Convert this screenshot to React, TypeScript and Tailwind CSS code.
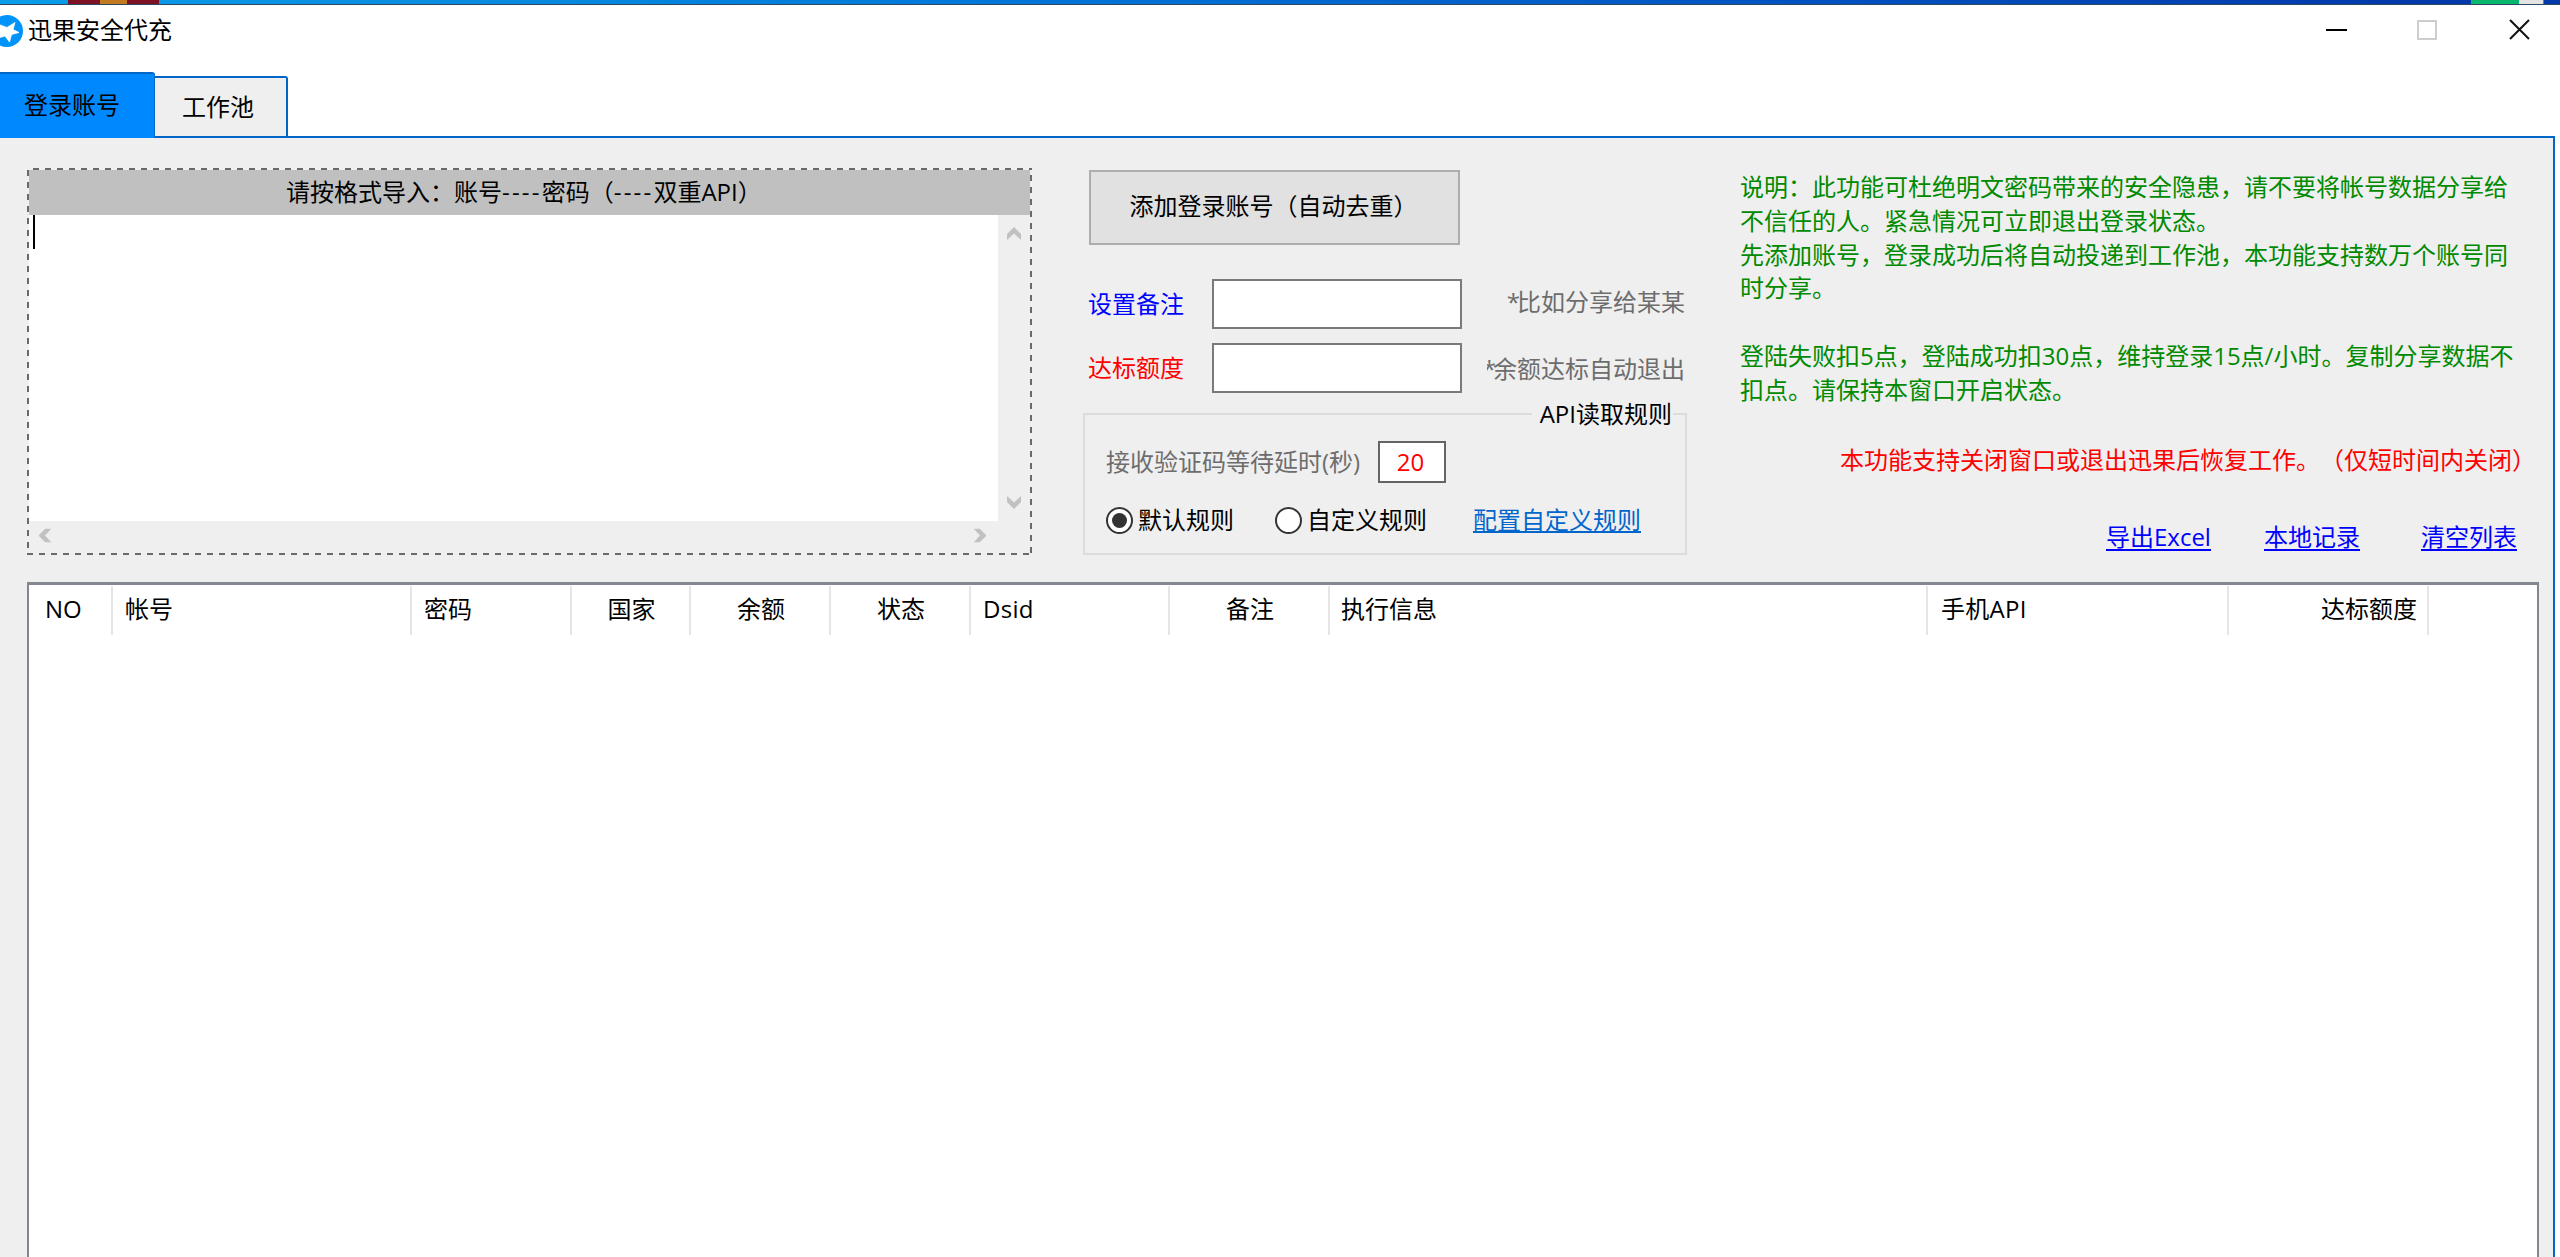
import React from "react";

// Columns of the account list, widths include the 2px divider on the right
const columns = [
  { title: "NO", className: "w-[84px] pl-[16px]" },
  { title: "帐号", className: "w-[299px] pl-[12px]" },
  { title: "密码", className: "w-[160px] pl-[12px]" },
  { title: "国家", className: "w-[119px] justify-center pl-[2px]" },
  { title: "余额", className: "w-[140px] justify-center pl-[2px]" },
  { title: "状态", className: "w-[140px] justify-center pl-[2px]" },
  { title: "Dsid", className: "w-[199px] pl-[12px] tracking-[0.3px]" },
  { title: "备注", className: "w-[160px] justify-center pl-[2px]" },
  { title: "执行信息", className: "w-[598px] pl-[11px]" },
  { title: "手机API", className: "w-[301px] pl-[13px] tracking-[0.3px]" },
  { title: "达标额度", className: "w-[200px] justify-end pr-[10px]" },
];

const notes = [
  "说明：此功能可杜绝明文密码带来的安全隐患，请不要将帐号数据分享给",
  "不信任的人。紧急情况可立即退出登录状态。",
  "先添加账号，登录成功后将自动投递到工作池，本功能支持数万个账号同",
  "时分享。",
  "",
  "登陆失败扣5点，登陆成功扣30点，维持登录15点/小时。复制分享数据不",
  "扣点。请保持本窗口开启状态。",
];

function Logo() {
  return (
    <svg className="-ml-[9px] h-[32px] w-[32px] shrink-0" viewBox="0 0 32 32">
      <circle cx="16" cy="16" r="16" fill="#0094fb" />
      <path
        d="M4 8 L16 12.5 L24 7.5 L22 14.5 L28 17.5 L20.5 19.5 L18.5 27 L14 21 L4 24 L9 16 Z"
        fill="#fff"
        stroke="#fff"
        strokeWidth="0.8"
        strokeLinejoin="round"
      />
    </svg>
  );
}

function Arrow({ className }: { className: string }) {
  return (
    <svg className={className} width="14" height="13" viewBox="0 0 14 13">
      <path d="M7 0 L14 7 V13 L7 6.5 L0 13 V7 Z" fill="#c1c1c1" />
    </svg>
  );
}

function Dashes() {
  return <span className="tracking-[2.2px]">----</span>;
}

function TitleBar() {
  return (
    <div className="flex h-[67px] items-start bg-white">
      <div className="flex h-[51px] flex-1 items-center">
        <Logo />
        <span className="ml-[5px] pb-px">迅果安全代充</span>
      </div>
      <div className="flex h-[49px] items-center pr-[30px]">
        <div className="h-[2px] w-[21px] bg-black" />
        <div className="ml-[70px] h-[20px] w-[20px] border-2 border-[#cdcdcd]" />
        <svg className="-mt-px ml-[72px]" width="21" height="21" viewBox="0 0 21 21">
          <path d="M1 1 L20 20 M20 1 L1 20" stroke="#111" strokeWidth="2" />
        </svg>
      </div>
    </div>
  );
}

function Tabs() {
  return (
    <div className="flex h-[64px] items-end">
      <div className="relative -mb-[2px] flex h-[66px] w-[155px] items-center rounded-tr-[3px] border-t-2 border-r border-[#0066c8] bg-[#0089ff] pb-[3px] pl-[24px]">
        <span>登录账号</span>
      </div>
      <div className="flex h-[60px] w-[133px] items-center rounded-tr-[3px] border-t-2 border-r-2 border-[#0066c8] bg-[#efefef] pb-px pl-[27px]">
        <span>工作池</span>
      </div>
    </div>
  );
}

function ImportBox() {
  return (
    <div className="flex h-[387px] w-[1005px] shrink-0 flex-col">
      <div className="h-[2px] bg-[repeating-linear-gradient(90deg,transparent_0_6px,#6a6a6a_6px_12px)]" />
      <div className="flex flex-1">
        <div className="w-[2px] bg-[repeating-linear-gradient(180deg,#6a6a6a_0_6px,transparent_6px_12px)]" />
        <div className="flex flex-1 flex-col">
          <div className="flex h-[45px] items-center bg-[#c0c0c0] pb-px pl-[257px] whitespace-nowrap">
            <span>
              请按格式导入：账号
              <Dashes />
              密码（
              <Dashes />
              双重API）
            </span>
          </div>
          <div className="flex flex-1">
            <div className="flex-1 bg-white pl-[4px]">
              <div className="h-[34px] w-[2px] bg-black" />
            </div>
            <div className="flex w-[32px] flex-col items-center justify-between pt-[12px] pr-px pb-[12px]">
              <Arrow className="" />
              <Arrow className="rotate-180" />
            </div>
          </div>
          <div className="flex h-[32px] items-center justify-between pr-[43px] pb-[3px] pl-[9px]">
            <Arrow className="-rotate-90" />
            <Arrow className="rotate-90" />
          </div>
        </div>
        <div className="w-[2px] bg-[repeating-linear-gradient(180deg,transparent_0_5px,#6a6a6a_5px_11px,transparent_11px_12px)]" />
      </div>
      <div className="h-[2px] bg-[repeating-linear-gradient(90deg,#6a6a6a_0_6px,transparent_6px_12px)]" />
    </div>
  );
}

function RuleGroup() {
  return (
    <div className="relative mt-[20px] h-[142px] w-[604px] border-2 border-[#dcdcdc] pl-[21px] whitespace-nowrap">
      <span className="absolute -top-[18px] right-[12px] flex h-[34px] w-[141px] items-center justify-end bg-[#efefef] pr-px">
        API读取规则
      </span>
      <div className="mt-[26px] flex h-[42px] items-center">
        <span className="w-[272px] text-[#6d6d6d]">接收验证码等待延时(秒)</span>
        <div className="flex h-[42px] w-[68px] items-center justify-center border-2 border-[#646464] bg-white pr-[3px] text-[#ff0000]">
          20
        </div>
      </div>
      <div className="mt-[20px] flex h-[34px] items-center">
        <div className="flex h-[27px] w-[27px] items-center justify-center rounded-full border-2 border-[#333] bg-white">
          <div className="h-[15px] w-[15px] rounded-full bg-[#333]" />
        </div>
        <span className="ml-[5px] w-[137px] pb-px">默认规则</span>
        <div className="h-[27px] w-[27px] rounded-full border-2 border-[#333] bg-white" />
        <span className="ml-[5px] w-[166px] pb-px">自定义规则</span>
        <a className="pb-px text-[#0066cc] underline decoration-2 underline-offset-[2px]">配置自定义规则</a>
      </div>
    </div>
  );
}

function Settings() {
  return (
    <div className="ml-[51px] w-[604px] shrink-0">
      <div className="mt-[2px] ml-[6px] flex h-[75px] w-[371px] items-center justify-center border-2 border-[#adadad] bg-[#e1e1e1] pr-[2px] pb-[3px]">
        <span>添加登录账号（自动去重）</span>
      </div>
      <div className="mt-[34px] ml-[5px] flex h-[50px] items-center">
        <span className="w-[124px] text-[#0000ff]">设置备注</span>
        <div className="h-[50px] w-[250px] border-2 border-[#7a7a7a] bg-white" />
        <span className="ml-auto pr-[2px] pb-[4px] text-[#6d6d6d]">
          <span className="tracking-[-3px]">*</span>比如分享给某某
        </span>
      </div>
      <div className="mt-[14px] ml-[5px] flex h-[50px] items-center">
        <span className="w-[124px] text-[#ff0000]">达标额度</span>
        <div className="h-[50px] w-[250px] border-2 border-[#7a7a7a] bg-white" />
        {/* The label is narrower than its text, the asterisk gets cut */}
        <div className="mt-px mr-[2px] ml-auto flex w-[198px] justify-end overflow-hidden whitespace-nowrap text-[#6d6d6d]">
          <span>
            <span className="tracking-[-3px]">*</span>余额达标自动退出
          </span>
        </div>
      </div>
      <RuleGroup />
    </div>
  );
}

function Notes() {
  return (
    <div className="ml-[53px] flex-1 whitespace-nowrap">
      <div className="mt-[2px] leading-[33.83px] text-[#008a00]">
        {notes.map((line, i) => (
          <p key={i} className="h-[33.83px]">
            {line}
          </p>
        ))}
      </div>
      <p className="mt-[36px] ml-[100px] text-[#ff0000]">本功能支持关闭窗口或退出迅果后恢复工作。（仅短时间内关闭）</p>
      <div className="mt-[43px] ml-[366px] flex text-[#0000ff] underline decoration-2 underline-offset-[3px]">
        <a className="w-[158px]">导出Excel</a>
        <a className="w-[157px]">本地记录</a>
        <a>清空列表</a>
      </div>
    </div>
  );
}

function AccountTable() {
  return (
    <div className="mt-[27px] w-[2512px] flex-1 border-x-2 border-t-3 border-[#828790] bg-white">
      <div className="flex h-[50px] pt-px">
        {columns.map((col) => (
          <div
            key={col.title}
            className={`flex h-[49px] shrink-0 items-center border-r-2 border-[#e5e5e5] pb-[3px] ${col.className}`}
          >
            {col.title}
          </div>
        ))}
      </div>
    </div>
  );
}

export default function App() {
  return (
    <div className="flex h-[1257px] w-[2560px] flex-col overflow-hidden bg-white font-['Open_Sans','Noto_Sans_CJK_SC',sans-serif] text-[24px] leading-[34px] text-black [text-spacing-trim:space-all]">
      {/* Desktop showing above the window */}
      <div className="flex h-[5px] shrink-0 border-b border-[#2b4a6b] bg-[linear-gradient(90deg,#0a9de8_0%,#0a8fe0_15%,#0078d8_38%,#0058c4_65%,#0338a8_95%)]">
        <div className="ml-[68px] w-[32px] bg-[#7c1224]" />
        <div className="w-[27px] bg-[#c47a20]" />
        <div className="w-[32px] bg-[#7c1224]" />
        <div className="mr-[16px] ml-auto flex">
          <div className="w-[48px] bg-[#05b66c]" />
          <div className="w-[25px] border-r border-[#05b66c] bg-[#e4e4e4]" />
        </div>
      </div>
      <TitleBar />
      <Tabs />
      <div className="flex w-[2555px] flex-1 flex-col border-t-2 border-r-2 border-[#0066c8] bg-[#efefef] pt-[30px] pl-[27px]">
        <div className="flex h-[387px]">
          <ImportBox />
          <Settings />
          <Notes />
        </div>
        <AccountTable />
      </div>
    </div>
  );
}
